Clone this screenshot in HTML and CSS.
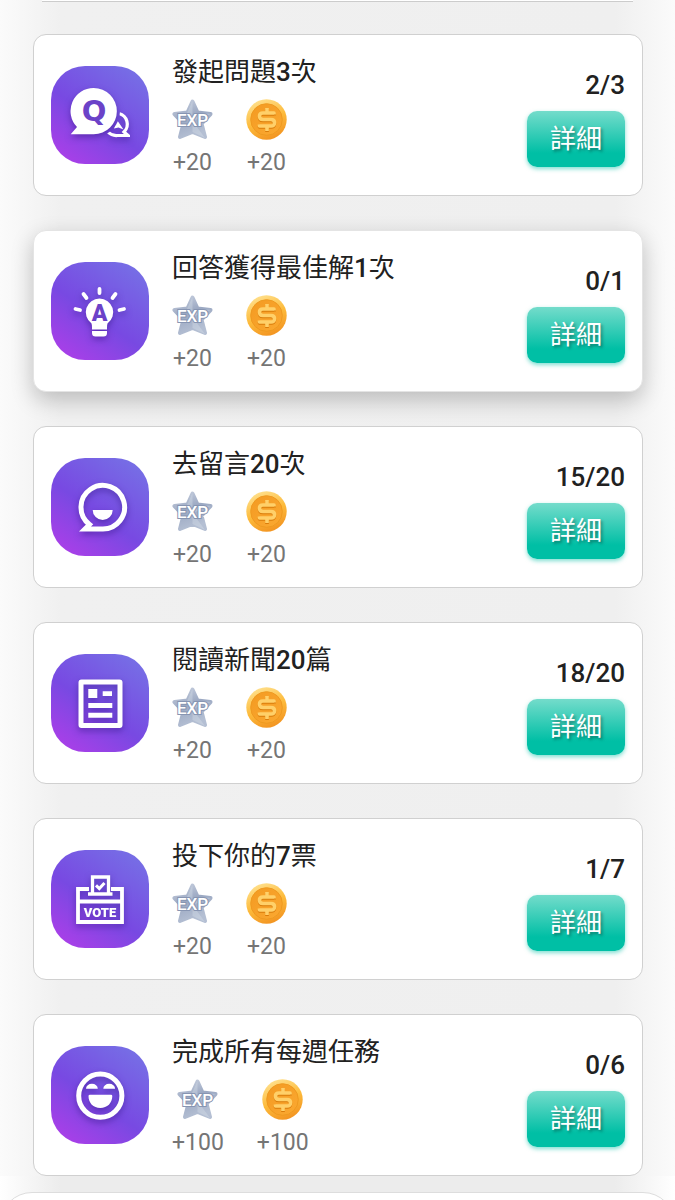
FILE: index.html
```html
<!DOCTYPE html>
<html lang="zh-Hant">
<head>
<meta charset="utf-8">
<meta name="viewport" content="width=device-width, initial-scale=1">
<title>每週任務</title>
<link rel="stylesheet" href="styles.css">
</head>
<body>
<svg class="sprite" aria-hidden="true">
  <defs>
    <linearGradient id="star-fill" x1="0" y1="0" x2="0.4" y2="1">
      <stop offset="0" stop-color="#c9d1e0"/><stop offset="0.5" stop-color="#9ba8c2"/><stop offset="1" stop-color="#b4bfd3"/>
    </linearGradient>
    <linearGradient id="coin-rim" x1="0.3" y1="0" x2="0.7" y2="1">
      <stop offset="0" stop-color="#ffe08c"/><stop offset="0.5" stop-color="#fdbb3c"/><stop offset="1" stop-color="#f2921f"/>
    </linearGradient>
    <linearGradient id="coin-face" x1="0" y1="0" x2="1" y2="1">
      <stop offset="0" stop-color="#f39a22"/><stop offset="1" stop-color="#fba931"/>
    </linearGradient>
    <mask id="behind-q">
      <rect width="98" height="98" fill="#fff"/><circle cx="43" cy="45" r="26" fill="#000"/>
    </mask>
  </defs>
  <symbol id="star" viewBox="0 0 41 41">
    <path d="M20.500 2.500 L25.500 13.500 L38.500 15 L29.500 24.500 L33 38 L20.500 33 L8 38 L11.500 24.500 L2.500 15 L15.500 13.500Z" fill="url(#star-fill)" stroke="url(#star-fill)" stroke-width="4" stroke-linejoin="round"/>
    <path d="M20.500 2 15 14 20.500 22ZM39 15 26 14 20.500 22ZM33 39 20.500 33V22Z" fill="#dbe1ec" opacity=".35"/>
  </symbol>
  <symbol id="coin" viewBox="0 0 41 41">
    <circle cx="20.500" cy="20.500" r="20.200" fill="url(#coin-rim)"/>
    <circle cx="20.500" cy="20.500" r="15.800" fill="url(#coin-face)" stroke="#ef9a20" stroke-width="1"/>
    <g fill="none" stroke-width="3.600" stroke-linejoin="round">
      <path d="M28 15.500V14H17Q13.500 14 13.500 17.200T17 20.500H25Q28.500 20.500 28.500 23.800T25 27H13.500V25.500M21 9V14M21 27V32" stroke="#d97c0b" transform="translate(0 1)"/>
      <path d="M28 15.500V14H17Q13.500 14 13.500 17.200T17 20.500H25Q28.500 20.500 28.500 23.800T25 27H13.500V25.500M21 9V14M21 27V32" stroke="#ffd069"/>
    </g>
  </symbol>
</svg>

<div class="page">
  <div class="card-tail"></div>
  <main class="tasks">
    <article class="card">
      <svg class="tile" viewBox="0 0 98 98" aria-hidden="true">
        <g class="glyph">
          <g mask="url(#behind-q)">
            <path d="M68 47.500A11 11 0 0 1 73 66L77 69.500H66.500A11.500 11.500 0 0 1 57 66" fill="none" stroke="#fff" stroke-width="3.200"/>
            <path d="M66 54 72.500 63.500 67.500 61.500 63 62.500Z" fill="#fff"/>
          </g>
          <path d="M42.700 22A23 23 0 1 1 42.700 68.300H19.700L26 61A23 23 0 0 1 42.700 22Z" fill="#fff"/>
        </g>
        <text class="letter-q" x="43" y="55" text-anchor="middle">Q</text>
      </svg>
      <div class="info">
        <h2 class="title">發起問題<b>3</b>次</h2>
        <ul class="rewards">
          <li><svg class="reward-icon" viewBox="0 0 41 41"><use href="#star"/><text class="exp-mark" x="20.500" y="27" text-anchor="middle">EXP</text></svg><span>+20</span></li>
          <li><svg class="reward-icon" viewBox="0 0 41 41"><use href="#coin"/></svg><span>+20</span></li>
        </ul>
      </div>
      <div class="side"><span class="count">2/3</span><button class="detail" type="button">詳細</button></div>
    </article>

    <article class="card raised">
      <svg class="tile" viewBox="0 0 98 98" aria-hidden="true">
        <g class="glyph">
          <path d="M48.500 27V31M32.500 32 35.500 36M64.500 32 61.500 36M24.500 47 29 48M73 47 68.500 48" stroke="#fff" stroke-width="3.800" stroke-linecap="round"/>
          <path d="M48.500 36.500A13.800 13.800 0 0 1 56.500 61.500Q56 63 56 65.500V67.500H41V65.500Q41 63 40.500 61.500A13.800 13.800 0 0 1 48.500 36.500Z" fill="#fff"/>
          <path d="M41 69H56V71Q56 74.500 52.500 74.500H44.500Q41 74.500 41 71Z" fill="#fff"/>
        </g>
        <text class="letter-a" x="48.500" y="59" text-anchor="middle">A</text>
      </svg>
      <div class="info">
        <h2 class="title">回答獲得最佳解<b>1</b>次</h2>
        <ul class="rewards">
          <li><svg class="reward-icon" viewBox="0 0 41 41"><use href="#star"/><text class="exp-mark" x="20.500" y="27" text-anchor="middle">EXP</text></svg><span>+20</span></li>
          <li><svg class="reward-icon" viewBox="0 0 41 41"><use href="#coin"/></svg><span>+20</span></li>
        </ul>
      </div>
      <div class="side"><span class="count">0/1</span><button class="detail" type="button">詳細</button></div>
    </article>

    <article class="card">
      <svg class="tile" viewBox="0 0 98 98" aria-hidden="true">
        <g class="glyph">
          <path d="M51 71H34L38.500 66.500A21.800 21.800 0 1 1 51 71Z" fill="none" stroke="#fff" stroke-width="5"/>
          <path d="M41.700 52h20a10 10 0 0 1-20 0z" fill="#fff"/>
        </g>
      </svg>
      <div class="info">
        <h2 class="title">去留言<b>20</b>次</h2>
        <ul class="rewards">
          <li><svg class="reward-icon" viewBox="0 0 41 41"><use href="#star"/><text class="exp-mark" x="20.500" y="27" text-anchor="middle">EXP</text></svg><span>+20</span></li>
          <li><svg class="reward-icon" viewBox="0 0 41 41"><use href="#coin"/></svg><span>+20</span></li>
        </ul>
      </div>
      <div class="side"><span class="count">15/20</span><button class="detail" type="button">詳細</button></div>
    </article>

    <article class="card">
      <svg class="tile" viewBox="0 0 98 98" aria-hidden="true">
        <g class="glyph">
          <rect x="30" y="28" width="39" height="43.500" rx="0.500" fill="none" stroke="#fff" stroke-width="5" stroke-linejoin="round"/>
          <path d="M37.300 35h9v9h-9zM51.700 37.300h9.300v4.700h-9.300zM37.300 49h24v5h-24zM37.300 58.700h24v5h-24z" fill="#fff"/>
        </g>
      </svg>
      <div class="info">
        <h2 class="title">閱讀新聞<b>20</b>篇</h2>
        <ul class="rewards">
          <li><svg class="reward-icon" viewBox="0 0 41 41"><use href="#star"/><text class="exp-mark" x="20.500" y="27" text-anchor="middle">EXP</text></svg><span>+20</span></li>
          <li><svg class="reward-icon" viewBox="0 0 41 41"><use href="#coin"/></svg><span>+20</span></li>
        </ul>
      </div>
      <div class="side"><span class="count">18/20</span><button class="detail" type="button">詳細</button></div>
    </article>

    <article class="card">
      <svg class="tile" viewBox="0 0 98 98" aria-hidden="true">
        <g class="glyph">
          <path d="M38 39H27V72H71V39H60M27 51.500H71" fill="none" stroke="#fff" stroke-width="3.800"/>
          <path d="M37 44H61.500" stroke="#fff" stroke-width="3.500"/>
          <path d="M41.500 44V27H57.500V44" fill="none" stroke="#fff" stroke-width="3.300"/>
          <path d="M45 35.300 48.300 38.500 53.500 33" fill="none" stroke="#fff" stroke-width="3"/>
          <text class="vote-mark" x="49" y="67" text-anchor="middle">VOTE</text>
        </g>
      </svg>
      <div class="info">
        <h2 class="title">投下你的<b>7</b>票</h2>
        <ul class="rewards">
          <li><svg class="reward-icon" viewBox="0 0 41 41"><use href="#star"/><text class="exp-mark" x="20.500" y="27" text-anchor="middle">EXP</text></svg><span>+20</span></li>
          <li><svg class="reward-icon" viewBox="0 0 41 41"><use href="#coin"/></svg><span>+20</span></li>
        </ul>
      </div>
      <div class="side"><span class="count">1/7</span><button class="detail" type="button">詳細</button></div>
    </article>

    <article class="card">
      <svg class="tile" viewBox="0 0 98 98" aria-hidden="true">
        <g class="glyph">
          <circle cx="49.300" cy="49.700" r="21.600" fill="none" stroke="#fff" stroke-width="5"/>
          <path d="M35 42.700a5.900 5 0 0 1 11.800 0zM52.300 42.700a5.900 5 0 0 1 11.800 0zM39 48.700h21q1.300 0 1.300 1.300c0 7-5 12-12 12s-11.800-5-11.800-12q0-1.300 1.500-1.300z" fill="#fff"/>
        </g>
      </svg>
      <div class="info">
        <h2 class="title">完成所有每週任務</h2>
        <ul class="rewards">
          <li><svg class="reward-icon" viewBox="0 0 41 41"><use href="#star"/><text class="exp-mark" x="20.500" y="27" text-anchor="middle">EXP</text></svg><span>+100</span></li>
          <li><svg class="reward-icon" viewBox="0 0 41 41"><use href="#coin"/></svg><span>+100</span></li>
        </ul>
      </div>
      <div class="side"><span class="count">0/6</span><button class="detail" type="button">詳細</button></div>
    </article>
  </main>
  <div class="next"><div class="panel"></div></div>
</div>
</body>
</html>
```
FILE: styles.css
```css
* {
  box-sizing: border-box;
}

body {
  margin: 0;
  background: #fff;
  color: #212121;
  font-family: Roboto, "Noto Sans CJK TC", sans-serif;
}

.sprite {
  position: absolute;
  width: 0;
  height: 0;
}

.page {
  background: linear-gradient(90deg, #fbfbfb, #f0f0f0 60px, #efefef calc(100% - 60px), #fbfbfb);
}

.card-tail {
  height: 2px;
  margin: 0 42px;
  background: #fff;
  border-bottom: 1px solid #ccc;
}

.tasks {
  display: flex;
  flex-direction: column;
  gap: 34px;
  padding: 32px 32px 0 33px;
}

.card {
  position: relative;
  display: flex;
  align-items: center;
  gap: 23px;
  min-height: 162px;
  padding: 0 17px;
  border: 1px solid #d0d0d0;
  border-radius: 13px;
  background: #fff;
}

.raised {
  border-color: #e4e4e4;
  box-shadow: 0 8px 22px rgba(0, 0, 0, 0.22);
}

.tile {
  flex: none;
  width: 98px;
  height: 98px;
  border-radius: 34px;
  background: linear-gradient(35deg, #a93fe8 8%, #7849e2 45%, #7675e6);
}

.glyph {
  filter: drop-shadow(0 3px 3px rgba(50, 20, 130, 0.5));
}

.letter-q {
  fill: #6b42c8;
  font-family: "DejaVu Sans", sans-serif;
  font-size: 29px;
  font-weight: 700;
}

.letter-a {
  fill: #6b42c8;
  font-size: 23px;
  font-weight: 900;
}

.vote-mark {
  fill: #fff;
  font-size: 13px;
  font-weight: 900;
}

.info {
  flex: 1;
  min-width: 0;
}

.title {
  margin: 0 0 9px;
  font-size: 26px;
  font-weight: 400;
  line-height: 36px;
}

.title b {
  font-weight: 500;
}

.rewards {
  display: flex;
  gap: 33px;
  margin: 0;
  padding: 0;
  list-style: none;
  color: #757575;
  font-size: 23px;
  line-height: 28px;
}

.rewards li {
  display: flex;
  flex-direction: column;
  align-items: center;
  gap: 9px;
  min-width: 41px;
}

.reward-icon {
  width: 41px;
  height: 41px;
}

.exp-mark {
  fill: #fff;
  stroke: #8795b2;
  stroke-width: 2px;
  paint-order: stroke;
  font-size: 17px;
  font-weight: 500;
}

.side {
  display: flex;
  flex-direction: column;
  align-items: flex-end;
  gap: 8px;
  padding-top: 4px;
}

.count {
  font-size: 26px;
  font-weight: 500;
  line-height: 36px;
}

.detail {
  height: 56px;
  padding: 0 23px;
  border: 0;
  border-radius: 10px;
  background: linear-gradient(#74dccb, #00bfa5 75%);
  box-shadow: 0 2px 4px rgba(0, 191, 165, 0.5);
  color: #fff;
  font: inherit;
  font-size: 26px;
  line-height: 36px;
  text-shadow: 2px 2px 3px rgba(0, 0, 0, 0.35);
}

.next {
  height: 24px;
  padding-top: 16px;
  overflow: hidden;
  background: linear-gradient(90deg, #fff, #ececec 60px, #ececec calc(100% - 60px), #fff);
}

.panel {
  height: 64px;
  border: 1px solid #ddd;
  border-radius: 32px;
  background: #fff;
}
```
